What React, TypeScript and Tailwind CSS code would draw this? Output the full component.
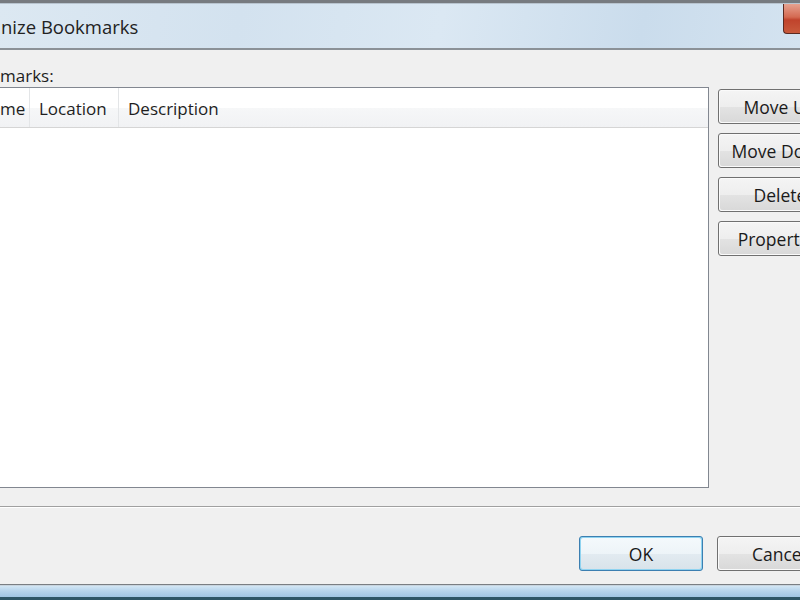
import React from "react";

const font = { fontFamily: '"Open Sans", "Noto Sans", sans-serif' };

function VistaButton({ label, isDefault = false }: { label: string; isDefault?: boolean }) {
  return (
    <div
      className={
        "w-[124px] h-[35px] shrink-0 rounded-[3px] border p-px " +
        (isDefault ? "border-[#3c7fb1] bg-[#8fd3f0]" : "border-[#707070] bg-[#fafafa]")
      }
    >
      <div
        className={
          "w-full h-full rounded-[2px] flex items-center justify-center text-[17.5px] text-[#1a1a1a] " +
          (isDefault
            ? "bg-[linear-gradient(to_bottom,#f4f9fc_0%,#edf4f8_50%,#e2ebf1_51%,#d9e3ea_100%)]"
            : "bg-[linear-gradient(to_bottom,#f4f4f4_0%,#eeeeee_50%,#e3e3e3_51%,#d9d9d9_100%)]")
        }
      >
        <span className="leading-none pt-[3px] whitespace-nowrap">{label}</span>
      </div>
    </div>
  );
}

export default function App() {
  return (
    <div className="w-[800px] h-[600px] overflow-hidden bg-[#f0f0f0] flex flex-col" style={font}>
      {/* title bar */}
      <div className="h-[50px] shrink-0 flex flex-col">
        <div className="h-[3px] bg-[#777b80]" />
        <div className="h-px bg-[#b8c4cf]" />
        <div className="flex-1 flex items-start bg-[linear-gradient(100deg,#dce8f2_0%,#d3e2ef_30%,#dbe8f3_55%,#cadcec_80%,#d4e3f0_100%)]">
          <div className="flex-1 self-stretch flex items-center pl-px pt-[2px] text-[18.5px] text-[#222] whitespace-nowrap">
            nize Bookmarks
          </div>
          <div className="w-[17px] h-[30px] rounded-bl-[4px] border-l border-b border-[#5a2a22] bg-[linear-gradient(to_bottom,#e6a290_0%,#d46a52_45%,#c0432c_55%,#c85a3c_100%)]" />
        </div>
        <div className="h-[2px] bg-[#8b9197]" />
      </div>

      {/* label */}
      <div className="h-[37px] shrink-0 pt-[16px]">
        <div className="leading-[20px] text-[17px] text-[#1e1e1e] whitespace-nowrap">marks:</div>
      </div>

      {/* main row */}
      <div className="h-[401px] shrink-0 flex">
        <div className="w-[711px] -ml-[2px] shrink-0 border border-[#828790] bg-white flex flex-col">
          <div className="h-[40px] flex text-[17px] text-[#1e1e1e] bg-[linear-gradient(to_bottom,#ffffff_0%,#ffffff_50%,#f6f7f8_51%,#f1f2f4_100%)] border-b border-[#d5d5d5]">
            <div className="w-[31px] shrink-0 flex items-center border-r border-[#e3e5e7] pl-px pt-[3px]">me</div>
            <div className="w-[89px] shrink-0 flex items-center border-r border-[#e3e5e7] pl-[9px] pt-[3px]">Location</div>
            <div className="flex-1 flex items-center pl-[9px] pt-[3px]">Description</div>
          </div>
          <div className="flex-1" />
        </div>
        <div className="ml-[9px] pt-[2px] flex flex-col gap-[9px]">
          <VistaButton label="Move Up" />
          <VistaButton label="Move Down" />
          <VistaButton label="Delete" />
          <VistaButton label="Properties" />
        </div>
      </div>

      {/* separator */}
      <div className="h-[18px] shrink-0" />
      <div className="h-px shrink-0 bg-[#a0a0a0]" />
      <div className="h-px shrink-0 bg-[#ffffff]" />

      {/* bottom buttons */}
      <div className="h-[28px] shrink-0" />
      <div className="h-[35px] shrink-0 flex pl-[579px] gap-[14px]">
        <VistaButton label="OK" isDefault />
        <VistaButton label="Cancel" />
      </div>
      <div className="flex-1" />

      {/* window bottom frame */}
      <div className="h-[16px] shrink-0 flex flex-col">
        <div className="h-px bg-[#7a7e83]" />
        <div className="h-px bg-[#c8d4de]" />
        <div className="flex-1 bg-[linear-gradient(to_bottom,#d2e6f5_0%,#b6d4ec_45%,#9fc4e3_100%)]" />
        <div className="h-[3px] bg-[#2d5566]" />
      </div>
    </div>
  );
}
